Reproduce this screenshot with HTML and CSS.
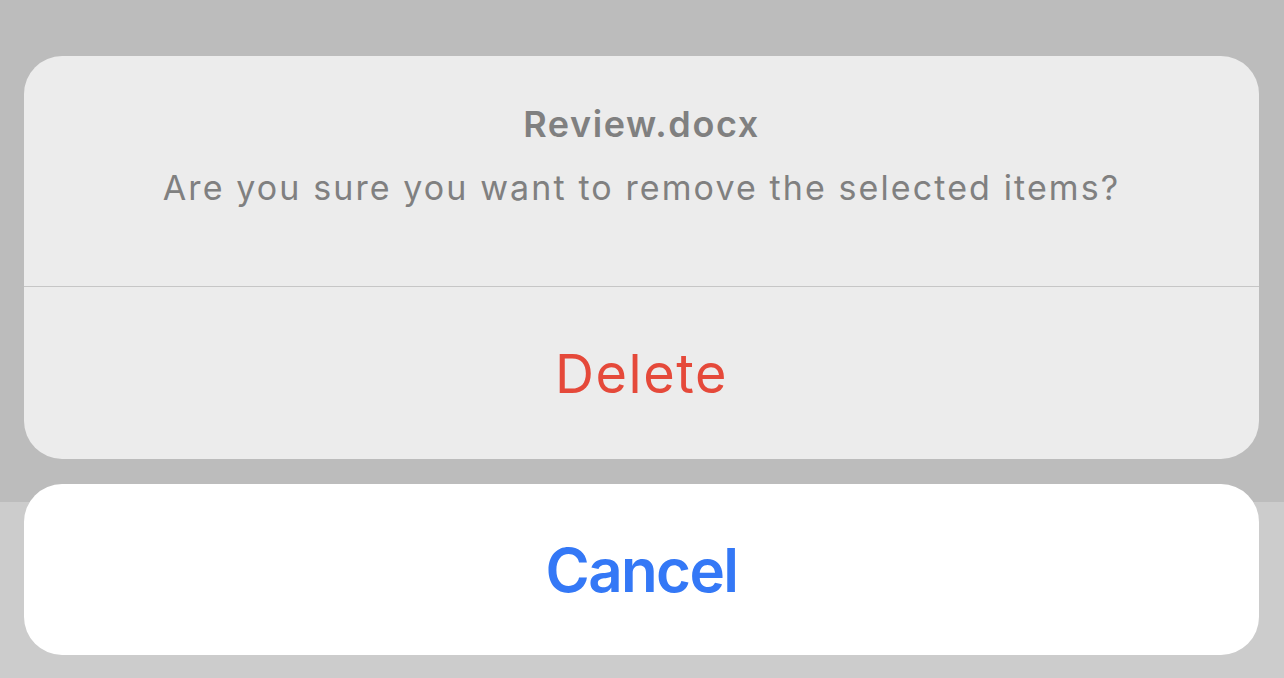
FILE: index.html
```html
<!DOCTYPE html>
<html lang="en">
<head>
<meta charset="utf-8">
<title>Action sheet</title>
<link rel="stylesheet" href="styles.css">
</head>
<body>
<div class="screen">
  <div class="sheet">
    <div class="group">
      <div class="header">
        <div class="title">Review.docx</div>
        <div class="message">Are you sure you want to remove the selected items?</div>
      </div>
      <button class="action destructive">Delete</button>
    </div>
    <button class="cancel">Cancel</button>
  </div>
</div>
</body>
</html>
```
FILE: styles.css
```css
html, body {
  margin: 0;
  padding: 0;
}
body {
  width: 1284px;
  height: 678px;
  overflow: hidden;
  font-family: Inter, Roboto, "Liberation Sans", sans-serif;
}
.screen {
  height: 678px;
  box-sizing: border-box;
  padding: 56px 25px 0 24px;
  background: linear-gradient(to bottom, #bcbcbc 0, #bcbcbc 502px, #cccccc 502px, #cccccc 100%);
}
.sheet {
  display: flex;
  flex-direction: column;
  gap: 25px;
}
.group {
  background: #ececec;
  border-radius: 38px;
  overflow: hidden;
  display: flex;
  flex-direction: column;
}
.header {
  height: 231px;
  box-sizing: border-box;
  border-bottom: 1px solid #c6c6c6;
  display: flex;
  flex-direction: column;
  align-items: center;
  padding-top: 100px;
}
.title {
  font-size: 36px;
  font-weight: 600;
  color: #808080;
  line-height: 40px;
  margin-top: -52px;
  letter-spacing: 1.6px;
}
.message {
  font-size: 34px;
  color: #808080;
  line-height: 40px;
  margin-top: 24px;
  letter-spacing: 2.1px;
}
.action, .cancel {
  border: 0;
  padding: 0;
  margin: 0;
  font-family: inherit;
  display: flex;
  align-items: center;
  justify-content: center;
  width: 100%;
}
.action {
  height: 172px;
  background: transparent;
  font-size: 54px;
  color: #e5493a;
  letter-spacing: 1.6px;
}
.cancel {
  height: 171px;
  background: #ffffff;
  border-radius: 38px;
  font-size: 60px;
  font-weight: 600;
  color: #3478f6;
  letter-spacing: -1.6px;
}
```
